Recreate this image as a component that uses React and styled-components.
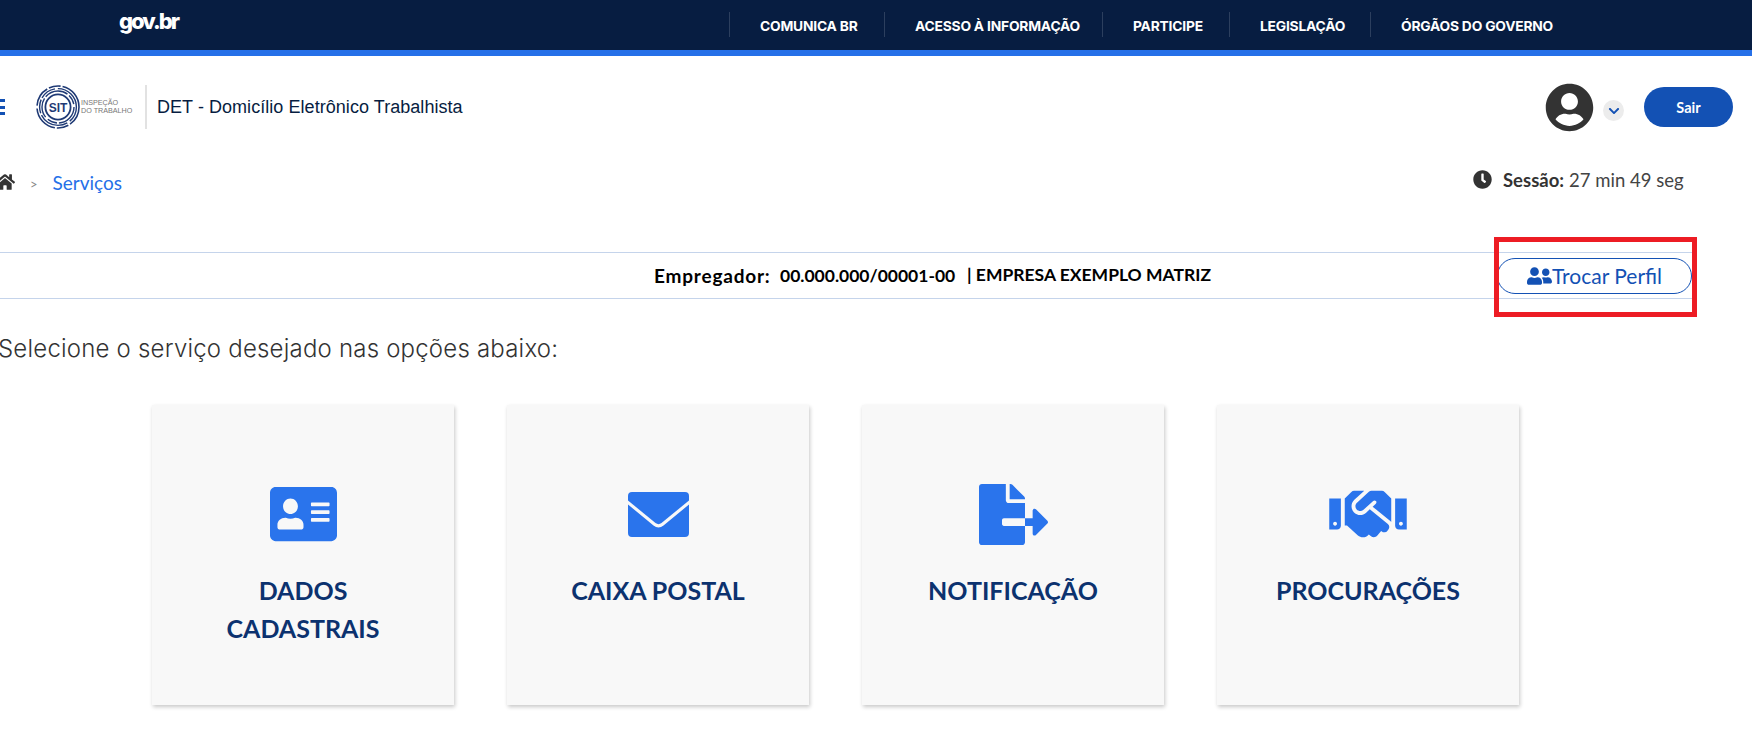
import React from 'react'
import styled, { createGlobalStyle } from 'styled-components'
import { FaHome, FaClock, FaUserCircle, FaChevronDown, FaUserFriends, FaAddressCard, FaFileExport, FaHandshake } from 'react-icons/fa'

const GlobalStyle = createGlobalStyle`
  html, body {
    margin: 0;
    background: #fff;
    overflow: hidden;
  }
  * { box-sizing: border-box; }
`

const Page = styled.div`
  width: 1752px;
  height: 738px;
  overflow: hidden;
  font-family: Lato, "Open Sans", sans-serif;
  color: #333;
`

const TopBar = styled.div`
  height: 56px;
  background: #071d41;
  border-bottom: 6px solid #2670e8;
  display: flex;
  align-items: center;
`

const GovLogo = styled.div`
  margin-left: 119px;
  margin-top: -9px;
  width: 610px;
  color: #fff;
  font-family: Inter, sans-serif;
  font-size: 22px;
  font-weight: 800;
  letter-spacing: -2px;
`

const Nav = styled.nav`
  display: flex;
  height: 25px;
  margin-top: -2px;
`

const NavItem = styled.a`
  width: ${props => props.width}px;
  padding-left: 30px;
  border-left: 1px solid #2c3f5e;
  color: #fff;
  font-family: Inter, sans-serif;
  font-size: 13.8px;
  font-weight: 700;
  letter-spacing: -0.2px;
  line-height: 29px;
  white-space: nowrap;
`

const Header = styled.header`
  height: 102px;
  display: flex;
  align-items: center;
`

const Burger = styled.div`
  width: 5px;
  height: 16px;
  margin-right: 31px;
  background: repeating-linear-gradient(#1351b4 0 3px, transparent 3px 6.5px);
`

const SitWrap = styled.div`
  display: flex;
  align-items: center;
  width: 111px;
  height: 44px;
  border-right: 2px solid #e2e2e2;
  margin-right: 10px;
`

const SitText = styled.div`
  margin-left: 1px;
  font-family: "Liberation Sans", sans-serif;
  font-size: 7.2px;
  line-height: 8px;
  color: #777;
  white-space: nowrap;
`

const Title = styled.div`
  font-family: "Liberation Sans", sans-serif;
  font-size: 18px;
  color: #071d41;
  letter-spacing: 0.05px;
`

const UserArea = styled.div`
  margin-left: auto;
  margin-right: 19px;
  display: flex;
  align-items: center;
`

const Avatar = styled(FaUserCircle)`
  width: 49px;
  height: 49px;
  color: #333;
`

const ChevronBall = styled.div`
  width: 21px;
  height: 21px;
  margin: 7px 20px 0 9px;
  border-radius: 50%;
  background: #ececec;
  color: #1351b4;
  display: flex;
  align-items: center;
  justify-content: center;
  font-size: 12px;
`

const LogoutBtn = styled.button`
  width: 89px;
  height: 40px;
  border: none;
  border-radius: 20px;
  background: #1351b4;
  color: #fff;
  font-family: Lato, sans-serif;
  font-size: 14.5px;
  font-weight: 700;
`

const CrumbRow = styled.div`
  height: 48px;
  display: flex;
  align-items: center;
  justify-content: space-between;
`

const Crumbs = styled.div`
  display: flex;
  align-items: center;
`

const HomeIcon = styled(FaHome)`
  width: 20px;
  height: 18px;
  margin-left: -5px;
  color: #333;
`

const CrumbSep = styled.span`
  margin: 3px 15px 0 15px;
  color: #888;
  font-size: 13px;
`

const CrumbLink = styled.a`
  color: #2670e8;
  font-size: 19px;
`

const Session = styled.div`
  display: flex;
  align-items: center;
  width: 279px;
  margin-bottom: 5px;
  font-size: 18.5px;
  color: #444;
`

const ClockIcon = styled(FaClock)`
  width: 19px;
  height: 19px;
  margin-right: 11px;
  color: #333;
`

const SessionLabel = styled.b`
  margin-right: 5px;
  color: #333;
`

const EmployerBar = styled.div`
  width: 1692px;
  height: 47px;
  margin-top: 46px;
  padding-left: 654px;
  border-top: 1px solid #c5d4eb;
  border-bottom: 1px solid #c5d4eb;
  display: flex;
  align-items: center;
  color: #000;
  font-weight: 700;
`

const EmployerLabel = styled.span`
  width: 126px;
  font-size: 19px;
  letter-spacing: 0.8px;
`

const EmployerDoc = styled.span`
  width: 187px;
  font-size: 17.5px;
`

const EmployerName = styled.span`
  font-size: 17.5px;
  margin-top: -3px;
`

const SwapWrap = styled.div`
  position: relative;
  margin-left: auto;
`

const SwapBtn = styled.button`
  width: 195px;
  height: 36px;
  padding: 0;
  border: 1px solid #1351b4;
  border-radius: 18px;
  background: #fff;
  color: #1351b4;
  font-family: Lato, sans-serif;
  font-size: 21px;
  display: flex;
  align-items: center;
  justify-content: center;
  svg {
    width: 25px;
    height: 20px;
  }
`

const RedBox = styled.div`
  position: absolute;
  top: -21px;
  left: -3px;
  width: 203px;
  height: 80px;
  border: 5px solid #ed1c24;
`

const Lead = styled.h2`
  margin: 35px 0 0 -2px;
  height: 30px;
  font-family: Inter, sans-serif;
  font-size: 24px;
  line-height: 30px;
  font-weight: 300;
  letter-spacing: 0.2px;
  color: #333;
`

const CardGrid = styled.div`
  display: grid;
  grid-template-columns: repeat(4, 302px);
  column-gap: 53px;
  margin-top: 41px;
  padding-left: 152px;
`

const Card = styled.div`
  height: 300px;
  padding-top: 77px;
  background: #f8f8f8;
  box-shadow: 1px 2px 4px rgba(0, 0, 0, 0.22);
  display: flex;
  flex-direction: column;
  align-items: center;
  text-align: center;
`

const IconSlot = styled.div`
  height: 64px;
  display: flex;
  align-items: center;
  justify-content: center;
  color: #2a74ec;
`

const CardTitle = styled.div`
  max-width: 220px;
  margin-top: 25px;
  color: #0c326f;
  font-size: 25px;
  line-height: 38px;
  font-weight: 700;
`

const Sit = () => (
  <svg width="44" height="44" viewBox="0 0 44 44" fill="none" stroke="#1f3a75">
    <circle cx="22" cy="22" r="21" strokeWidth="1.6" strokeDasharray="20 2 12 2 28 3" />
    <circle cx="22" cy="22" r="18.4" strokeWidth="1.4" strokeDasharray="16 3 30 2 14 2" />
    <circle cx="22" cy="22" r="16" strokeWidth="1.4" strokeDasharray="24 2 10 3 20 2" />
    <circle cx="22" cy="22" r="12.6" strokeWidth="1.8" />
    <text x="22" y="26.500" textAnchor="middle" fill="#1f3a75" stroke="none" fontFamily="Liberation Sans, sans-serif" fontSize="12" fontWeight="700">SIT</text>
  </svg>
)

const Envelope = () => (
  <svg width="61" height="45" viewBox="0 0 61 45">
    <path fill="currentColor" d="M4 0h53a4 4 0 0 1 4 4v4.500L33.500 31a5 5 0 0 1-6 0L0 8.500V4a4 4 0 0 1 4-4z" />
    <path fill="currentColor" d="M0 12.500 25.500 33.500a8 8 0 0 0 10 0L61 12.500V41a4 4 0 0 1-4 4H4a4 4 0 0 1-4-4z" />
  </svg>
)

const services = [
  { title: 'DADOS CADASTRAIS', icon: <FaAddressCard style={{ width: 67, height: 62 }} preserveAspectRatio="none" /> },
  { title: 'CAIXA POSTAL', icon: <Envelope /> },
  { title: 'NOTIFICAÇÃO', icon: <FaFileExport style={{ width: 69, height: 61 }} preserveAspectRatio="none" /> },
  { title: 'PROCURAÇÕES', icon: <FaHandshake style={{ width: 78, height: 62 }} /> },
]

const navLinks = [
  ['COMUNICA BR', 155],
  ['ACESSO À INFORMAÇÃO', 218],
  ['PARTICIPE', 127],
  ['LEGISLAÇÃO', 141],
  ['ÓRGÃOS DO GOVERNO', 200],
]

export default function App() {
  return (
    <Page>
      <GlobalStyle />
      <TopBar>
        <GovLogo>gov.br</GovLogo>
        <Nav>
          {navLinks.map(([label, width]) => (
            <NavItem key={label} width={width}>{label}</NavItem>
          ))}
        </Nav>
      </TopBar>

      <Header>
        <Burger />
        <SitWrap>
          <Sit />
          <SitText>INSPEÇÃO<br />DO TRABALHO</SitText>
        </SitWrap>
        <Title>DET - Domicílio Eletrônico Trabalhista</Title>
        <UserArea>
          <Avatar />
          <ChevronBall><FaChevronDown /></ChevronBall>
          <LogoutBtn>Sair</LogoutBtn>
        </UserArea>
      </Header>

      <CrumbRow>
        <Crumbs>
          <HomeIcon />
          <CrumbSep>&gt;</CrumbSep>
          <CrumbLink>Serviços</CrumbLink>
        </Crumbs>
        <Session>
          <ClockIcon />
          <SessionLabel>Sessão:</SessionLabel> 27 min 49 seg
        </Session>
      </CrumbRow>

      <EmployerBar>
        <EmployerLabel>Empregador:</EmployerLabel>
        <EmployerDoc>00.000.000/00001-00</EmployerDoc>
        <EmployerName>| EMPRESA EXEMPLO MATRIZ</EmployerName>
        <SwapWrap>
          <SwapBtn><FaUserFriends />Trocar Perfil</SwapBtn>
          <RedBox />
        </SwapWrap>
      </EmployerBar>

      <Lead>Selecione o serviço desejado nas opções abaixo:</Lead>

      <CardGrid>
        {services.map(s => (
          <Card key={s.title}>
            <IconSlot>{s.icon}</IconSlot>
            <CardTitle>{s.title}</CardTitle>
          </Card>
        ))}
      </CardGrid>
    </Page>
  )
}
